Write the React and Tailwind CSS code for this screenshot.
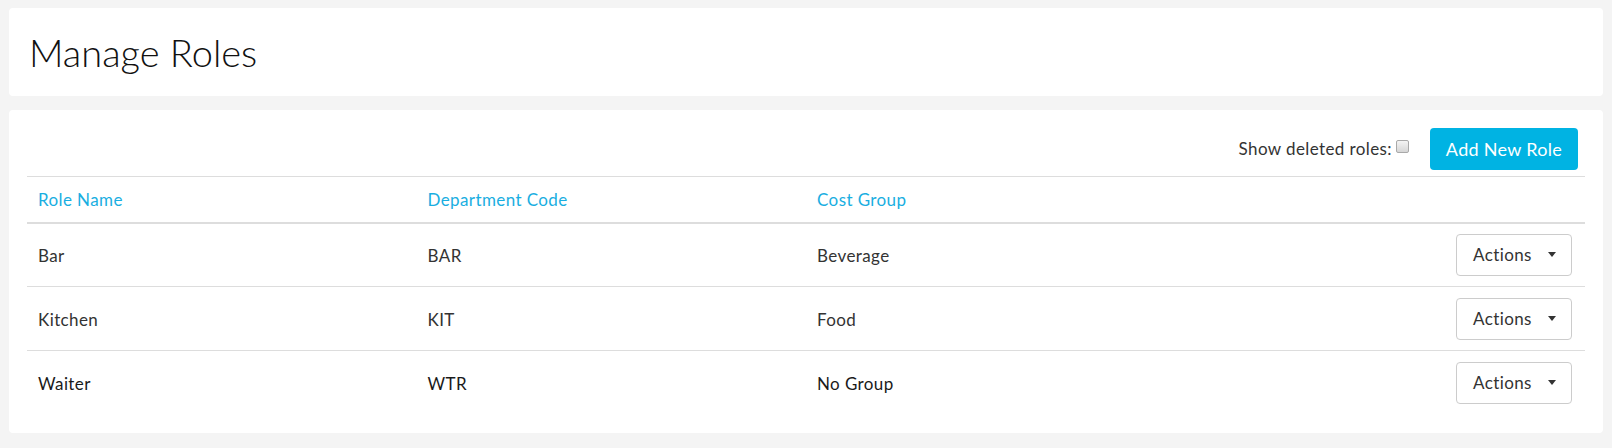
import React from 'react';

const roles = [
    { name: 'Bar', code: 'BAR', group: 'Beverage', dark: false },
    { name: 'Kitchen', code: 'KIT', group: 'Food', dark: false },
    { name: 'Waiter', code: 'WTR', group: 'No Group', dark: true },
];

function ActionsButton() {
    return (
        <button
            type="button"
            className="inline-flex items-center justify-between w-[116px] h-[42px] pl-[16px] pr-[15px] rounded-[4px] border border-[#cccccc] bg-white text-[17px] tracking-[0.4px] text-[#333333]"
        >
            <span>Actions</span>
            <span className="w-0 h-0 border-x-[4.5px] border-x-transparent border-t-[5px] border-t-[#333333]" />
        </button>
    );
}

export default function App() {
    return (
        <div
            className="min-h-[448px] bg-[#f4f4f4] pt-[8px] px-[9px] flex flex-col gap-[14px]"
            style={{ fontFamily: 'Lato, "Open Sans", Arial, sans-serif' }}
        >
            <div className="h-[88px] bg-white rounded-[4px] px-[20px] flex items-center">
                <h1 className="text-[38px] font-light text-[#111111] leading-none">Manage Roles</h1>
            </div>

            <div className="bg-white rounded-[4px] px-[18px] pt-[18px] pb-[18px]">
                <div className="flex items-center justify-end h-[42px] mr-[7px]">
                    <label className="flex items-center text-[17px] tracking-[0.4px] text-[#333333] mr-[21px]">
                        Show deleted roles:
                        <span className="relative -top-[3px] ml-[4px] inline-block w-[13px] h-[13px] rounded-[2px] border border-[#a9a9a9] bg-gradient-to-b from-[#f4f4f4] to-[#d6d6d6]" />
                    </label>
                    <button
                        type="button"
                        className="h-[42px] w-[148px] rounded-[4px] bg-[#00b3e3] text-white text-[18px] tracking-[0.3px]"
                    >
                        Add New Role
                    </button>
                </div>

                <table className="w-full table-fixed border-collapse mt-[6px] border-t border-[#dddddd]">
                    <thead>
                        <tr className="h-[46px] border-b-2 border-[#dddddd]">
                            <th className="text-left font-normal text-[17px] tracking-[0.4px] text-[#19aee1] px-[11px]">Role Name</th>
                            <th className="text-left font-normal text-[17px] tracking-[0.4px] text-[#19aee1] px-[11px]">Department Code</th>
                            <th className="text-left font-normal text-[17px] tracking-[0.4px] text-[#19aee1] px-[11px]">Cost Group</th>
                            <th />
                        </tr>
                    </thead>
                    <tbody>
                        {roles.map((r, i) => (
                            <tr
                                key={r.code}
                                className={
                                    (i < roles.length - 1 ? 'border-b border-[#dddddd] ' : '') +
                                    'h-[64px] text-[17px] tracking-[0.4px] ' +
                                    (r.dark ? 'text-[#1a1a1a]' : 'text-[#333333]')
                                }
                            >
                                <td className="px-[11px] pt-[2px]">{r.name}</td>
                                <td className="px-[11px] pt-[2px]">{r.code}</td>
                                <td className="px-[11px] pt-[2px]">{r.group}</td>
                                <td className="pr-[13px] text-right">
                                    <ActionsButton />
                                </td>
                            </tr>
                        ))}
                    </tbody>
                </table>
            </div>
        </div>
    );
}
